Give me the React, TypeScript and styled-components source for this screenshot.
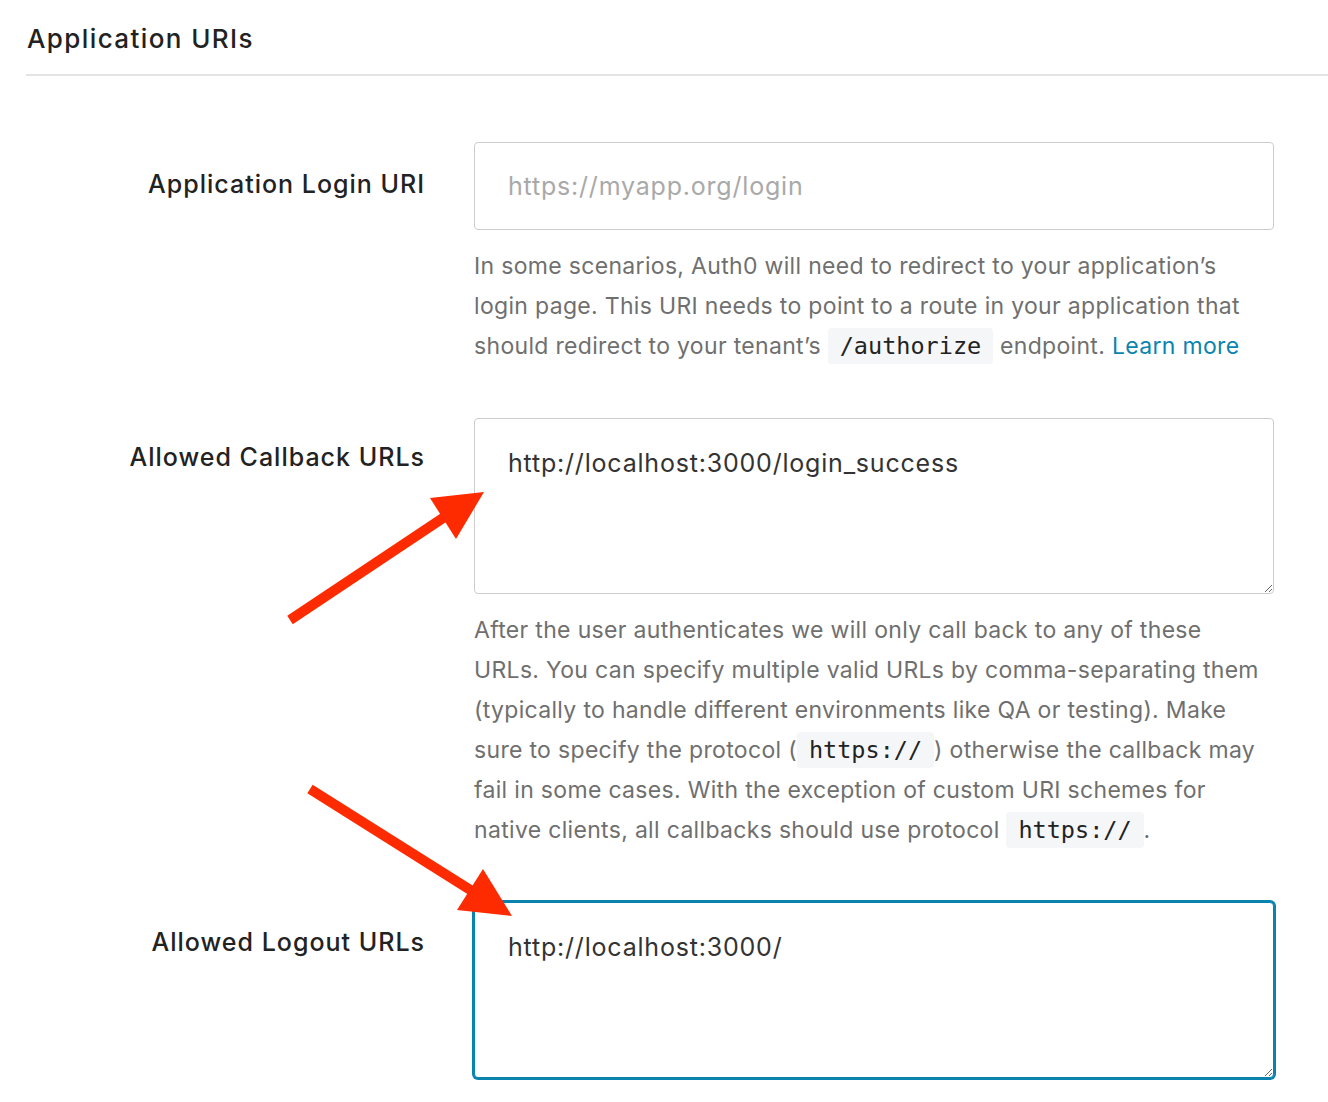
import React from "react";
import styled, { createGlobalStyle } from "styled-components";

const Global = createGlobalStyle`
  html, body { margin: 0; padding: 0; background: #fff; }
  body { font-family: Inter, "Noto Sans", sans-serif; color: #222; }
`;

const Page = styled.div`
  position: relative;
  width: 1328px;
  height: 1102px;
  overflow: hidden;
  background: #fff;
`;

const Header = styled.div`
  margin-left: 26px;
  height: 76px;
  border-bottom: 2px solid #e3e3e3;
  box-sizing: border-box;
  display: flex;
  align-items: flex-start;
`;

const Title = styled.h2`
  margin: 0;
  padding: 22px 0 0 1px;
  font-size: 26px;
  line-height: 34px;
  font-weight: 500;
  letter-spacing: 1.4px;
  color: #222;
`;

const Form = styled.div`
  display: flex;
  flex-direction: column;
  gap: 52px;
  padding-top: 66px;
`;

const Row = styled.div`
  display: grid;
  grid-template-columns: 425px 800px;
  column-gap: 49px;
  align-items: start;
`;

const Label = styled.label<{ $top: number }>`
  text-align: right;
  font-size: 25px;
  line-height: 40px;
  font-weight: 500;
  letter-spacing: 1px;
  color: #222;
  padding-top: ${(p) => p.$top}px;
`;

const Field = styled.div`
  display: flex;
  flex-direction: column;
  gap: 16px;
`;

const TextInput = styled.input`
  box-sizing: border-box;
  width: 800px;
  height: 88px;
  border: 1px solid #ccc;
  border-radius: 4px;
  padding: 0 33px;
  font-family: inherit;
  font-size: 25px;
  letter-spacing: 0.8px;
  color: #333;
  outline: none;
  &::placeholder { color: #a9a9a9; }
`;

const TextArea = styled.textarea<{ $focused?: boolean }>`
  box-sizing: border-box;
  width: 800px;
  height: 176px;
  border: 1px solid ${(p) => (p.$focused ? "#0a84ae" : "#ccc")};
  box-shadow: ${(p) => (p.$focused ? "0 0 0 2px #0a84ae" : "none")};
  border-radius: 4px;
  padding: 26px 33px;
  font-family: inherit;
  font-size: 25px;
  letter-spacing: 0.8px;
  line-height: 36px;
  color: #333;
  resize: vertical;
  outline: none;
  display: block;
`;

const Help = styled.p`
  margin: 0;
  padding-right: 6px;
  font-size: 23px;
  letter-spacing: 0.32px;
  line-height: 40px;
  color: #6f6f6f;
`;

const Code = styled.code`
  display: inline-block;
  background: #f5f6f8;
  border-radius: 4px;
  padding: 0 12px;
  font-family: "DejaVu Sans Mono", "Liberation Mono", monospace;
  font-size: 23.5px;
  letter-spacing: 0;
  line-height: 36px;
  color: #222;
`;

const Link = styled.a`
  color: #0a84ae;
  text-decoration: none;
`;

const Overlay = styled.svg`
  position: absolute;
  left: 0;
  top: 0;
  pointer-events: none;
`;

export default function App() {
  return (
    <Page>
      <Global />
      <Header>
        <Title>Application URIs</Title>
      </Header>
      <Form>
        <Row>
          <Label $top={22}>Application Login URI</Label>
          <Field>
            <TextInput placeholder="https://myapp.org/login" />
            <Help>
              In some scenarios, Auth0 will need to redirect to your application’s login page. This URI
              needs to point to a route in your application that should redirect to your tenant’s{" "}
              <Code>/authorize</Code> endpoint. <Link href="#">Learn more</Link>
            </Help>
          </Field>
        </Row>
        <Row>
          <Label $top={19}>Allowed Callback URLs</Label>
          <Field>
            <TextArea defaultValue="http://localhost:3000/login_success" />
            <Help>
              After the user authenticates we will only call back to any of these URLs. You can specify
              multiple valid URLs by comma-separating them (typically to handle different environments
              like QA or testing). Make sure to specify the protocol (<Code>https://</Code>) otherwise
              the callback may fail in some cases. With the exception of custom URI schemes for native
              clients, all callbacks should use protocol <Code>https://</Code>.
            </Help>
          </Field>
        </Row>
        <Row>
          <Label $top={20}>Allowed Logout URLs</Label>
          <Field>
            <TextArea $focused defaultValue="http://localhost:3000/" />
          </Field>
        </Row>
      </Form>
      <Overlay width={1328} height={1102} viewBox="0 0 1328 1102">
        <line x1={290} y1={620} x2={446} y2={516} stroke="#fe2a00" strokeWidth={10} />
        <polygon points="484,492 430,498 456,539" fill="#fe2a00" />
        <line x1={310} y1={789} x2={472} y2={891} stroke="#fe2a00" strokeWidth={10} />
        <polygon points="512,916 483,869 457,910" fill="#fe2a00" />
      </Overlay>
    </Page>
  );
}
